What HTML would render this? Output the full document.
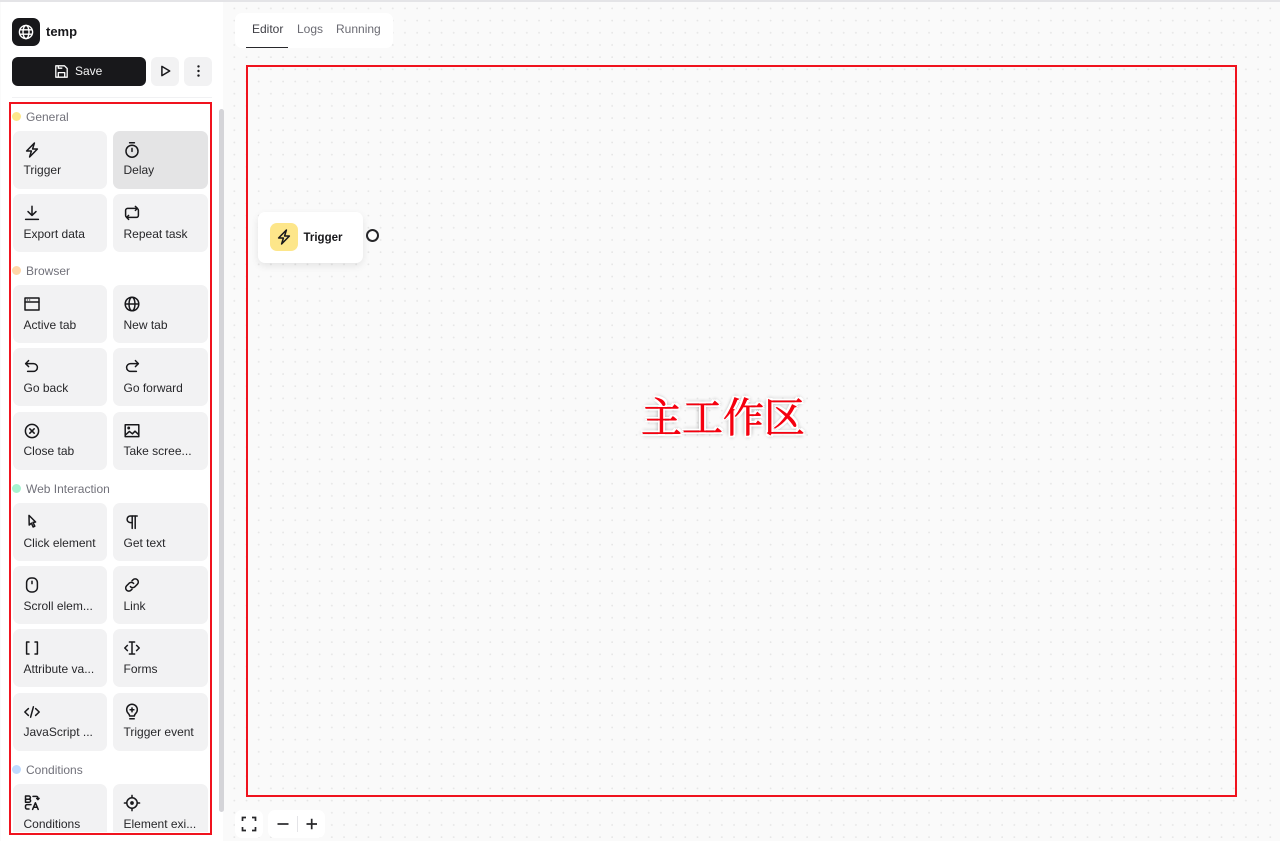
<!DOCTYPE html>
<html lang="en">
<head>
<meta charset="utf-8">
<title>temp</title>
<style>
html,body{margin:0;padding:0;width:1280px;height:841px;overflow:hidden;background:#fafafa;font-family:"Liberation Sans","Noto Sans CJK SC",sans-serif;color:#18181b}
*{box-sizing:border-box}
.abs{position:absolute}
#bg{left:0;top:0;width:1280px;height:841px;background-color:#fafafa;background-image:radial-gradient(circle at 1.1px 1.1px,#e6e6e6 0,#e6e6e6 .7px,transparent 1.1px);background-size:12.2px 12.2px;background-position:1.7px 7.3px}
#topline{left:0;top:0;width:1280px;height:1.5px;background:#e4e4e7;z-index:5}
#side{left:1px;top:1px;width:222px;height:840px;background:#fff}
.card{position:absolute;width:94.5px;height:58px;background:#f2f2f3;border-radius:7px;font-size:12px;color:#27272a}
.card span{position:absolute;left:11px;top:33px;white-space:nowrap;line-height:14px}
.card svg{position:absolute;left:10px;top:10px;width:18px;height:18px;fill:none;stroke:#18181b;stroke-width:1.5;stroke-linecap:round;stroke-linejoin:round}
.c1{left:12.5px}.c2{left:112.5px;width:95.5px}
.head{position:absolute;left:26px;font-size:12px;color:#71717a;line-height:14px;white-space:nowrap}
.dot{position:absolute;left:12px;width:9px;height:9px;border-radius:50%}
.tab{position:absolute;top:22px;font-size:12px;line-height:14px;color:#6b6b73}
</style>
</head>
<body>
<div id="bg" class="abs"></div>
<div id="side" class="abs"></div>
<div id="topline" class="abs"></div>

<!-- logo -->
<div class="abs" style="left:12px;top:18px;width:28px;height:28px;background:#18181b;border-radius:7px"></div>
<svg class="abs" style="left:18px;top:24px" width="16" height="16" viewBox="0 0 16 16" fill="none" stroke="#fff" stroke-width="1.4"><circle cx="8" cy="8" r="6.6"/><ellipse cx="8" cy="8" rx="3" ry="6.6"/><path d="M1.8 5.8h12.4M1.8 10.2h12.4"/></svg>
<div class="abs" style="left:46px;top:24px;font-size:13px;font-weight:700;line-height:16px">temp</div>

<!-- actions -->
<div class="abs" style="left:12px;top:57px;width:134px;height:28.5px;background:#18181b;border-radius:6px"></div>
<svg class="abs" style="left:54px;top:64px" width="15" height="15" viewBox="0 0 15 15" fill="none" stroke="#fff" stroke-width="1.3" stroke-linejoin="round"><path d="M1.8 1.8h8.7l2.7 2.7v8.7H1.8z"/><path d="M4.3 13V8.6h6.4V13"/><path d="M4.3 1.8v2.4h4"/></svg>
<div class="abs" style="left:75px;top:64px;color:#f4f4f5;font-size:12px;line-height:14px">Save</div>
<div class="abs" style="left:151px;top:57px;width:28px;height:28.5px;background:#f2f2f3;border-radius:6px"></div>
<svg class="abs" style="left:158px;top:64px" width="14" height="14" viewBox="0 0 14 14" fill="none" stroke="#18181b" stroke-width="1.5" stroke-linejoin="round"><path d="M3.9 2.4v9.2l7.8-4.6z"/></svg>
<div class="abs" style="left:184px;top:57px;width:28px;height:28.5px;background:#f2f2f3;border-radius:6px"></div>
<svg class="abs" style="left:190px;top:63px" width="16" height="16" viewBox="0 0 16 16" fill="#18181b"><circle cx="8.5" cy="3.4" r="1.2"/><circle cx="8.5" cy="8" r="1.2"/><circle cx="8.5" cy="12.6" r="1.2"/></svg>
<div class="abs" style="left:12px;top:97px;width:200px;height:1px;background:#f1f1f3"></div>

<!-- scrollbar -->
<div class="abs" style="left:219px;top:109px;width:5px;height:703px;background:#d4d4d8;border-radius:3px"></div>

<!-- list -->
<div class="abs" style="left:0;top:0;width:224px;height:832px;overflow:hidden">
<div class="dot" style="top:112px;background:#fde68a"></div><div class="head" style="top:110px">General</div>

<div class="card c1" style="top:131px"><svg viewBox="0 0 18 18"><path d="M11.4 2 3.6 10h4.800L6.600 16l7.800-8H9.600z"/></svg><span style="top:32px">Trigger</span></div>
<div class="card c2" style="top:131px;background:#e4e4e5"><svg viewBox="0 0 18 18"><circle cx="9" cy="10.2" r="6"/><path d="M6.600 1.800h4.800M9 7.400v3"/></svg><span style="top:32px">Delay</span></div>
<div class="card c1" style="top:194px"><svg viewBox="0 0 18 18"><path d="M9 2.200v9M5 7.600l4 3.800 4-3.800M2.600 15.400h12.800"/></svg><span>Export data</span></div>
<div class="card c2" style="top:194px"><svg viewBox="0 0 18 18"><path d="M14.400 4.400H4.600a2 2 0 0 0-2 2v5a2 2 0 0 0 2 2h1.600M3.600 13.400h9.800a2 2 0 0 0 2-2v-5a2 2 0 0 0-2-2h-1.600"/><path d="M12.400 2.400l2 2-2 2M5.600 11.400l-2 2 2 2"/></svg><span>Repeat task</span></div>

<div class="dot" style="top:266px;background:#fed7aa"></div><div class="head" style="top:264px">Browser</div>

<div class="card c1" style="top:285px"><svg viewBox="0 0 18 18"><rect x="2" y="3" width="14" height="12"/><path d="M2 7h14"/><path d="M4.200 5h.4M6.400 5h.4" stroke-width="1.100"/></svg><span>Active tab</span></div>
<div class="card c2" style="top:285px"><svg viewBox="0 0 18 18"><circle cx="9" cy="9" r="6.800"/><ellipse cx="9" cy="9" rx="3" ry="6.800"/><path d="M2.400 9h13.200"/></svg><span>New tab</span></div>
<div class="card c1" style="top:348px"><svg viewBox="0 0 18 18"><path d="M5.600 2.600 2.600 5.600l3 3"/><path d="M2.800 5.600h7.700a3.900 3.900 0 0 1 0 7.800H4.600"/></svg><span>Go back</span></div>
<div class="card c2" style="top:348px"><svg viewBox="0 0 18 18"><path d="M12.400 2.600l3 3-3 3"/><path d="M15.200 5.600H7.500a3.900 3.900 0 0 0 0 7.800h5.900"/></svg><span>Go forward</span></div>
<div class="card c1" style="top:412px"><svg viewBox="0 0 18 18"><circle cx="9" cy="9" r="6.600"/><path d="M6.800 6.800l4.400 4.400M11.200 6.800l-4.400 4.400"/></svg><span style="top:32px">Close tab</span></div>
<div class="card c2" style="top:412px"><svg viewBox="0 0 18 18"><rect x="2.200" y="2.800" width="13.600" height="11.800"/><path d="M2.400 13l4-3.600 3 2.400 2.600-2.600 3.600 3.400"/><circle cx="5.700" cy="6" r=".7"/></svg><span style="top:32px">Take scree...</span></div>

<div class="dot" style="top:484px;background:#a7f3d0"></div><div class="head" style="top:482px">Web Interaction</div>

<div class="card c1" style="top:503px"><svg viewBox="0 0 18 18"><path d="M6 2.400 12.600 9l-2.600.4 1.800 3.800-1.600.8-1.800-3.800L6.200 12z"/></svg><span>Click element</span></div>
<div class="card c2" style="top:503px"><svg viewBox="0 0 18 18"><path d="M14.200 3H7.400a3.300 3.300 0 0 0 0 6.600H9"/><path d="M9.200 3v12.400M12.200 3v12.400"/></svg><span>Get text</span></div>
<div class="card c1" style="top:566px"><svg viewBox="0 0 18 18"><rect x="3.600" y="2" width="10.800" height="14" rx="4.600"/><path d="M9 5.200v2.400"/></svg><span>Scroll elem...</span></div>
<div class="card c2" style="top:566px"><svg viewBox="0 0 18 18"><path d="M7.400 10.600a3 3 0 0 0 4.400.2l2.600-2.600a3.100 3.100 0 0 0-4.400-4.400L9 4.800"/><path d="M10.600 7.400a3 3 0 0 0-4.400-.2L3.600 9.800a3.100 3.100 0 0 0 4.400 4.400l1-1"/></svg><span>Link</span></div>
<div class="card c1" style="top:629px"><svg viewBox="0 0 18 18"><path d="M6 3H3.600v12H6M12 3h2.400v12H12"/></svg><span>Attribute va...</span></div>
<div class="card c2" style="top:629px"><svg viewBox="0 0 18 18"><path d="M6.400 3h5.200M6.400 15h5.200M9 3v12"/><path d="M4.400 6.400 1.800 9l2.600 2.600M13.600 6.400 16.200 9l-2.600 2.600"/></svg><span>Forms</span></div>
<div class="card c1" style="top:693px"><svg viewBox="0 0 18 18"><path d="M5.400 5.600 1.800 9l3.600 3.400M12.600 5.600 16.200 9l-3.600 3.400M10.400 3.800 7.600 14.200"/></svg><span style="top:32px">JavaScript ...</span></div>
<div class="card c2" style="top:693px"><svg viewBox="0 0 18 18"><path d="M6.600 13c0-1.200-.6-1.900-1.400-2.700A5.300 5.300 0 1 1 12.800 10.300c-.8.8-1.400 1.500-1.400 2.700z"/><path d="M6.800 15.800h4.400M9 4.900v3.800M7.100 6.800h3.800"/></svg><span style="top:32px">Trigger event</span></div>

<div class="dot" style="top:765px;background:#bfdbfe"></div><div class="head" style="top:763px">Conditions</div>

<div class="card c1" style="top:784px"><svg viewBox="0 0 18 18" stroke-width="1.4"><path d="M2.500 2h3.300a1.500 1.500 0 0 1 0 3.200H2.500zM2.500 5.200h3.600a1.500 1.500 0 0 1 0 3H2.500z"/><path d="M10 2.400h3.400a1.500 1.500 0 0 1 1.500 1.500v1.500M13.700 4.400l1.200 1.200 1.200-1.200M8 10.600H4a1.500 1.500 0 0 0-1.500 1.500v1.400A1.500 1.500 0 0 0 4 15h2"/><path d="M9.600 15.400 12.400 8.800l2.800 6.600M10.600 13.300h3.600"/></svg><span>Conditions</span></div>
<div class="card c2" style="top:784px"><svg viewBox="0 0 18 18"><circle cx="9" cy="9" r="5.200"/><circle cx="9" cy="9" r="1.100" fill="#18181b"/><path d="M9 1.400v2.400M9 14.200v2.400M1.400 9h2.400M14.200 9h2.400"/></svg><span>Element exi...</span></div>
</div>

<!-- tabs -->
<div class="abs" style="left:235px;top:13px;width:158px;height:35px;background:#fff;border-radius:7px"></div>
<div class="tab" style="left:252px;color:#3f3f46">Editor</div>
<div class="tab" style="left:297px">Logs</div>
<div class="tab" style="left:336px">Running</div>
<div class="abs" style="left:246px;top:47px;width:42px;height:1px;background:#27272a"></div>

<!-- node -->
<div class="abs" style="left:258px;top:212px;width:105px;height:50.500px;background:#fff;border-radius:7px;box-shadow:0 3px 8px rgba(0,0,0,.09)"></div>
<div class="abs" style="left:270px;top:223px;width:28px;height:28px;background:#fde68a;border-radius:7px"></div>
<svg class="abs" style="left:275px;top:228px" width="18" height="18" viewBox="0 0 18 18" fill="none" stroke="#18181b" stroke-width="1.500" stroke-linejoin="round"><path d="M11.400 2 3.600 10h4.800L6.600 16l7.800-8H9.600z"/></svg>
<div class="abs" style="left:303.500px;top:231px;font-size:11.500px;font-weight:700;line-height:14px">Trigger</div>
<div class="abs" style="left:366px;top:229px;width:13px;height:13px;border:2px solid #27272a;border-radius:50%;background:#fff"></div>

<!-- annotation -->
<div class="abs" style="left:9px;top:102px;width:203px;height:733px;border:2px solid #f0131e"></div>
<div class="abs" style="left:246px;top:65px;width:991px;height:732px;border:2px solid #f0131e"></div>
<div class="abs" style="left:641px;top:394px;font-family:'Liberation Serif','Noto Serif CJK SC',serif;font-size:41px;line-height:48px;color:#f5000f;-webkit-text-stroke:.6px #f5000f;white-space:nowrap;text-shadow:2px 0 0 #fff,-2px 0 0 #fff,0 2px 0 #fff,0 -2px 0 #fff,2px 2px 0 #fff,-2px 2px 0 #fff,2px -2px 0 #fff,-2px -2px 0 #fff,3px 0 3px rgba(0,0,0,.2),-3px 0 3px rgba(0,0,0,.2),0 3px 3px rgba(0,0,0,.2),0 -3px 3px rgba(0,0,0,.2)">主工作区</div>

<!-- controls -->
<div class="abs" style="left:235px;top:810px;width:28px;height:28px;background:#fff;border-radius:7px"></div>
<svg class="abs" style="left:241px;top:816px" width="16" height="16" viewBox="0 0 16 16" fill="none" stroke="#27272a" stroke-width="1.700"><path d="M1.500 5V1.500H5M11 1.500h3.500V5M14.500 11v3.500H11M5 14.500H1.500V11"/></svg>
<div class="abs" style="left:268px;top:810px;width:57px;height:28px;background:#fff;border-radius:7px"></div>
<div class="abs" style="left:296.500px;top:816px;width:1px;height:16px;background:#e4e4e7"></div>
<svg class="abs" style="left:275px;top:816px" width="16" height="16" viewBox="0 0 16 16" fill="none" stroke="#27272a" stroke-width="1.700"><path d="M2.500 8h11"/></svg>
<svg class="abs" style="left:304px;top:816px" width="16" height="16" viewBox="0 0 16 16" fill="none" stroke="#27272a" stroke-width="1.700"><path d="M2.500 8h10.500M7.700 2.700v10.600"/></svg>
</body>
</html>
